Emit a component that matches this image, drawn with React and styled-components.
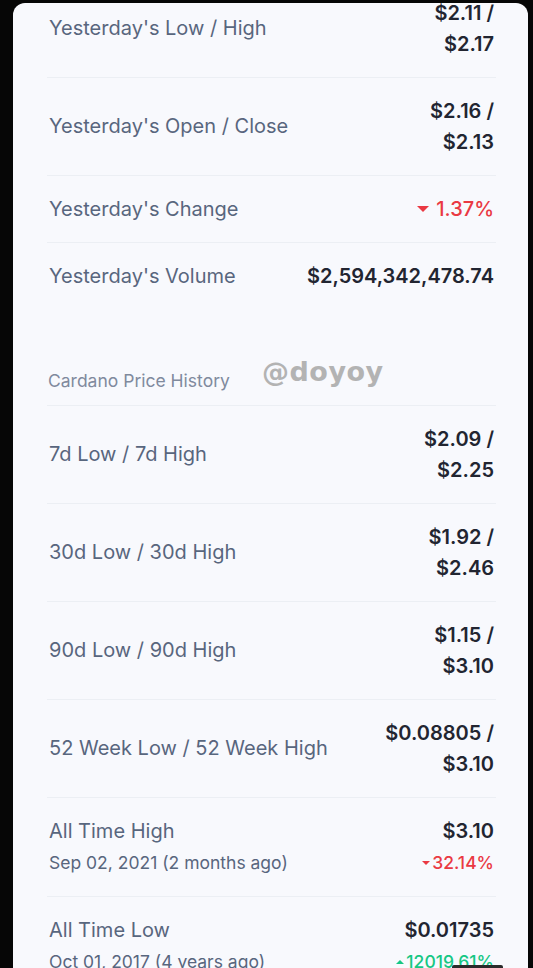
import styled, { createGlobalStyle } from "styled-components";

const GlobalStyle = createGlobalStyle`
  html, body {
    margin: 0;
    padding: 0;
    background: #060606;
    height: 100%;
    overflow: hidden;
  }
  #root {
    height: 100%;
  }
`;

const Screen = styled.div`
  position: relative;
  height: 968px;
  padding: 3px 5px 0 13px;
  box-sizing: border-box;
`;

const Panel = styled.main`
  height: 100%;
  background: #f8f9fd;
  border-radius: 12px 12px 0 0;
  overflow: hidden;
  padding: 0 32px 0 34px;
  font-family: Inter, "Liberation Sans", sans-serif;
`;

const List = styled.div`
  margin-top: -23px;
`;

const Row = styled.div`
  display: flex;
  align-items: center;
  justify-content: space-between;
  padding: ${(p) => (p.$tall ? "18px 0" : "17.5px 0")};
  border-bottom: ${(p) => (p.$last ? "none" : "1px solid #eceff4")};
`;

const Label = styled.div`
  font-size: 20px;
  line-height: 31px;
  color: #58667e;
  padding-left: 2px;
`;

const SubLabel = styled.div`
  font-size: 17.5px;
  line-height: 31px;
  color: #58667e;
  padding-left: 2px;
`;

const Value = styled.div`
  font-size: 20px;
  line-height: 31px;
  font-weight: 600;
  color: #222531;
  text-align: right;
  padding-right: 2px;
  span {
    display: block;
  }
`;

const Change = styled.div`
  display: flex;
  align-items: center;
  justify-content: flex-end;
  gap: ${(p) => (p.$small ? "2px" : "7px")};
  font-size: ${(p) => (p.$small ? "17.5px" : "20px")};
  line-height: 31px;
  font-weight: 500;
  color: ${(p) => (p.$up ? "#16c784" : "#ea3943")};
  padding-right: 2px;
`;

const Caret = styled.i`
  display: block;
  width: 0;
  height: 0;
  border-left: ${(p) => p.$size}px solid transparent;
  border-right: ${(p) => p.$size}px solid transparent;
  ${(p) =>
    p.$up
      ? `border-bottom: ${p.$size}px solid currentColor;`
      : `border-top: ${p.$size}px solid currentColor;`}
`;

const SectionTitle = styled.div`
  position: relative;
  margin-top: 59px;
  padding-bottom: 12px;
  font-size: 17.5px;
  line-height: 25px;
  color: #808a9d;
  border-bottom: 1px solid #eceff4;
  padding-left: 1px;
`;

const Watermark = styled.span`
  position: absolute;
  left: 215px;
  top: -9px;
  font-family: "DejaVu Sans", sans-serif;
  font-weight: 700;
  font-size: 27px;
  letter-spacing: 0.5px;
  color: #b3b3b3;
`;

const HomeBar = styled.div`
  position: absolute;
  left: 452px;
  bottom: 0;
  width: 51px;
  height: 3px;
  background: #2a2a2a;
  border-radius: 2px 2px 0 0;
`;

const pairRows = [
  ["Yesterday's Low / High", "$2.11 /", "$2.17"],
  ["Yesterday's Open / Close", "$2.16 /", "$2.13"],
];

const historyRows = [
  ["7d Low / 7d High", "$2.09 /", "$2.25"],
  ["30d Low / 30d High", "$1.92 /", "$2.46"],
  ["90d Low / 90d High", "$1.15 /", "$3.10"],
  ["52 Week Low / 52 Week High", "$0.08805 /", "$3.10"],
];

const PairRow = ({ label, top, bottom }) => (
  <Row>
    <Label>{label}</Label>
    <Value>
      <span>{top}</span>
      <span>{bottom}</span>
    </Value>
  </Row>
);

const App = () => {
  return (
    <>
      <GlobalStyle />
      <Screen>
        <Panel>
          <List>
            {pairRows.map(([label, top, bottom]) => (
              <PairRow key={label} label={label} top={top} bottom={bottom} />
            ))}
            <Row>
              <Label>Yesterday's Change</Label>
              <Change>
                <Caret $size={6} />
                1.37%
              </Change>
            </Row>
            <Row $last>
              <Label>Yesterday's Volume</Label>
              <Value>$2,594,342,478.74</Value>
            </Row>

            <SectionTitle>
              Cardano Price History
              <Watermark>@doyoy</Watermark>
            </SectionTitle>

            {historyRows.map(([label, top, bottom]) => (
              <PairRow key={label} label={label} top={top} bottom={bottom} />
            ))}
            <Row $tall>
              <div>
                <Label>All Time High</Label>
                <SubLabel>Sep 02, 2021 (2 months ago)</SubLabel>
              </div>
              <div>
                <Value>$3.10</Value>
                <Change $small>
                  <Caret $size={4} />
                  32.14%
                </Change>
              </div>
            </Row>
            <Row $tall>
              <div>
                <Label>All Time Low</Label>
                <SubLabel>Oct 01, 2017 (4 years ago)</SubLabel>
              </div>
              <div>
                <Value>$0.01735</Value>
                <Change $small $up>
                  <Caret $size={4} $up />
                  12019.61%
                </Change>
              </div>
            </Row>
          </List>
        </Panel>
        <HomeBar />
      </Screen>
    </>
  );
};

export default App;
